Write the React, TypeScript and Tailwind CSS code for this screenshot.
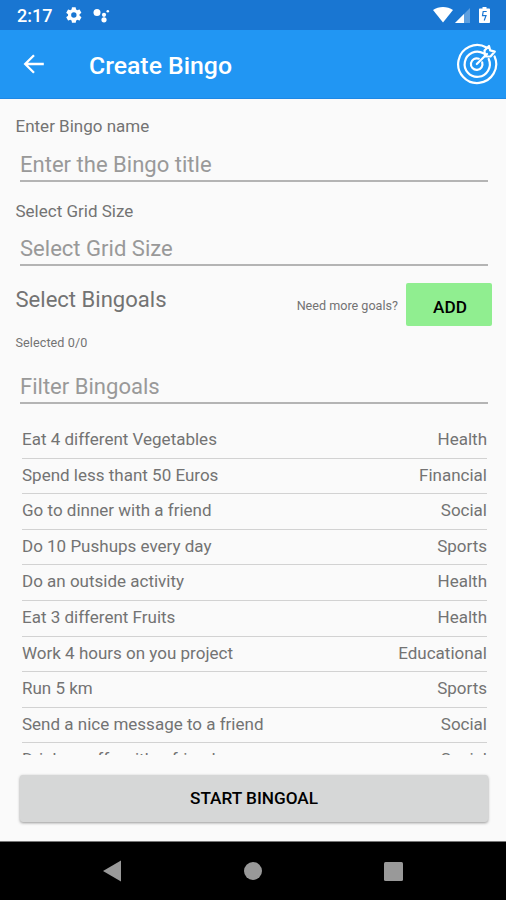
import React from 'react';

const goals: [string, string][] = [
  ['Eat 4 different Vegetables', 'Health'],
  ['Spend less thant 50 Euros', 'Financial'],
  ['Go to dinner with a friend', 'Social'],
  ['Do 10 Pushups every day', 'Sports'],
  ['Do an outside activity', 'Health'],
  ['Eat 3 different Fruits', 'Health'],
  ['Work 4 hours on you project', 'Educational'],
  ['Run 5 km', 'Sports'],
  ['Send a nice message to a friend', 'Social'],
  ['Drink a coffe with a friend', 'Social'],
];

function StatusBar() {
  return (
    <div className="flex h-[30px] shrink-0 items-center bg-[#1976d2] pl-[17px] pr-[16px] text-white">
      <span className="w-[49px] pt-[2px] text-[18px] font-medium leading-none">2:17</span>
      <svg className="-ml-px h-[18px] w-[18px]" viewBox="0 0 24 24" fill="currentColor">
        <path d="M19.4 13a7.500 7.500 0 0 0 0-2l2.200-1.700c.2-.2.300-.5.100-.7l-2.100-3.600c-.1-.2-.4-.3-.6-.2l-2.600 1a7.700 7.700 0 0 0-1.700-1l-.4-2.700a.5.5 0 0 0-.5-.4H9.700a.5.5 0 0 0-.5.400l-.4 2.700c-.6.200-1.200.6-1.700 1l-2.600-1a.5.5 0 0 0-.6.200L1.800 8.600c-.1.200-.1.500.1.700L4.100 11a7.500 7.500 0 0 0 0 2l-2.200 1.700c-.2.200-.2.500-.1.700l2.100 3.600c.1.200.4.300.6.200l2.600-1c.5.400 1.100.8 1.700 1l.4 2.700c0 .2.200.4.500.4h4.200c.2 0 .4-.2.500-.4l.4-2.700c.6-.2 1.200-.6 1.700-1l2.600 1c.2.100.5 0 .6-.2l2.100-3.600c.1-.2.100-.5-.1-.7L19.400 13ZM11.800 15.600a3.600 3.600 0 1 1 0-7.200 3.600 3.600 0 0 1 0 7.200Z" />
      </svg>
      <svg className="ml-[10px] h-[18px] w-[18px]" viewBox="0 0 18 18" fill="currentColor">
        <circle cx="4" cy="6.600" r="3.500" />
        <circle cx="11" cy="8.800" r="2.100" />
        <circle cx="11" cy="13.800" r="2.600" />
        <circle cx="14.800" cy="5.300" r="1.300" />
      </svg>
      <svg className="ml-auto h-[18px] w-[20px]" viewBox="0 0 20 18" fill="currentColor">
        <path d="M0 4C5.500 0 14.500 0 20 4L10 16.500Z" />
      </svg>
      <svg className="ml-[2px] h-[18px] w-[15px]" viewBox="0 0 15 18" fill="currentColor">
        <path d="M0 17 15 2v15Z" opacity=".3" />
        <path d="M0 17 9 8v9Z" />
      </svg>
      <svg className="ml-[9px] h-[18px] w-[11px]" viewBox="0 0 11 18">
        <path fill="currentColor" d="M3.500 1h4v1.600H10c.6 0 1 .4 1 1V16c0 .6-.4 1-1 1H1c-.6 0-1-.4-1-1V3.600c0-.6.400-1 1-1h2.500Z" />
        <path fill="none" stroke="#1976d2" strokeWidth="1.200" d="M7.700 5.500H4.200L3.500 9.600H7L5.200 14.500" />
      </svg>
    </div>
  );
}

function TargetIcon() {
  return (
    <svg className="h-[42px] w-[42px]" viewBox="0 0 42 42" fill="none" stroke="#fff" strokeWidth="2.200" strokeLinecap="round" strokeLinejoin="round">
      <path d="M30.500 4.500A19 19 0 1 0 38.600 13.500" />
      <path d="M27.500 10.300A12.600 12.600 0 1 0 32.700 16" />
      <path d="M22.800 15.700A5.800 5.800 0 1 0 26.200 19.300" />
      <path d="M20.800 21 31 11M29 13.300 28.500 7.500 33 3 34.200 7.400 38.800 8.600 34.500 13.500Z" />
    </svg>
  );
}

function AppBar() {
  return (
    <div className="flex h-[69px] shrink-0 items-center border-b border-[#1e88e5] bg-[#2196f3] pl-[23px] pr-[8px] text-white">
      <svg className="h-[22px] w-[22px]" viewBox="0 0 22 22" fill="none" stroke="currentColor" strokeWidth="2.300">
        <path d="M20.800 11H2.500M11 2.200 2.200 11 11 19.800" />
      </svg>
      <h1 className="ml-[44px] pt-[4px] text-[24.800px] font-medium leading-none">Create Bingo</h1>
      <div className="ml-auto"><TargetIcon /></div>
    </div>
  );
}

function Field({ placeholder }: { placeholder: string }) {
  return (
    <div className="ml-[20px] mr-[18px] h-[34px] border-b-2 border-[#b4b4b4] text-[22.050px] leading-[34px] text-[#999]">
      {placeholder}
    </div>
  );
}

function Goal({ name, category }: { name: string; category: string }) {
  return (
    <li className="flex h-[35.600px] shrink-0 justify-between border-b-[1.500px] border-[#d2d2d2] text-[17px] leading-[33px]">
      <span>{name}</span>
      <span>{category}</span>
    </li>
  );
}

export default function App() {
  return (
    <div className="flex h-[900px] w-[506px] flex-col overflow-hidden bg-[#fafafa] font-['Roboto',sans-serif] text-[#737373]">
      <StatusBar />
      <AppBar />
      <main className="flex min-h-0 flex-1 flex-col">
        <p className="mt-[17px] px-[15.500px] text-[17px] leading-[20px]">Enter Bingo name</p>
        <div className="mt-[12px]"><Field placeholder="Enter the Bingo title" /></div>
        <p className="mt-[19px] px-[15.500px] text-[17px] leading-[20px]">Select Grid Size</p>
        <div className="mt-[11px]"><Field placeholder="Select Grid Size" /></div>
        <div className="mt-[17px] flex h-[43px] pl-[15.500px] pr-[14px]">
          <h2 className="text-[22.050px] leading-[34px]">Select Bingoals</h2>
          <span className="ml-auto mr-[8px] text-[12.600px] leading-[45px]">Need more goals?</span>
          <button className="h-[43px] w-[86px] rounded-[2px] bg-[#90ee90] pt-[6px] pl-[2px] text-[17.200px] font-medium text-black">ADD</button>
        </div>
        <p className="mt-[9px] px-[15.500px] text-[12.600px] leading-[16px] tracking-[0.080px]">Selected 0/0</p>
        <div className="mt-[19px]"><Field placeholder="Filter Bingoals" /></div>
        <ul className="ml-[22px] mr-[19px] mt-[19px] flex h-[332px] shrink-0 flex-col overflow-hidden">
          {goals.map(([name, category]) => <Goal key={name} name={name} category={category} />)}
        </ul>
        <button className="ml-[20px] mr-[18px] mt-[20px] h-[47px] shrink-0 rounded-[3px] bg-[#d6d7d7] text-[17.200px] font-medium text-black shadow-[0_1px_3px_rgba(0,0,0,0.4)]">START BINGOAL</button>
      </main>
      <nav className="flex h-[59px] shrink-0 items-center justify-between border-t border-[#777] bg-black pl-[102px] pr-[103px]">
        <svg className="h-[22px] w-[20px]" viewBox="0 0 20 22" fill="#999"><path d="M1 11 19 .5v21Z" /></svg>
        <div className="h-[18px] w-[18px] rounded-full bg-[#999]" />
        <div className="h-[19px] w-[19px] rounded-[1.500px] bg-[#999]" />
      </nav>
    </div>
  );
}
